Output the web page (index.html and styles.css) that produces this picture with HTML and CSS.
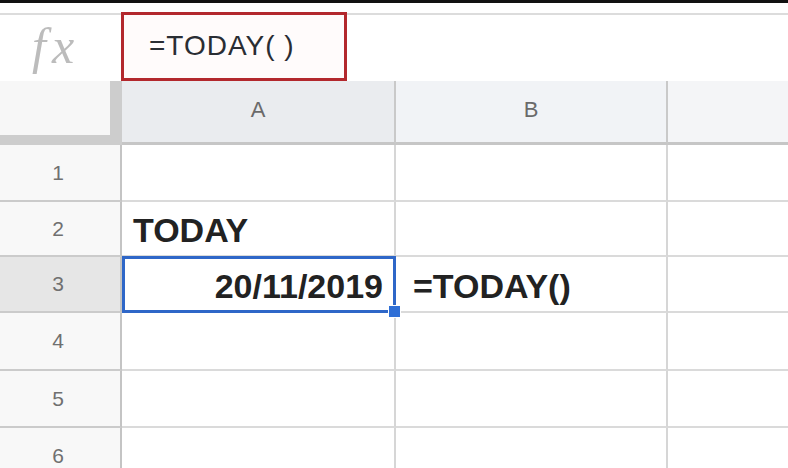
FILE: index.html
```html
<!DOCTYPE html>
<html>
<head>
<meta charset="utf-8">
<link rel="stylesheet" href="styles.css">
</head>
<body>
<div class="page">
  <div class="topbar"></div>
  <div class="formula-row">
    <div class="fx-cell"><span class="fx">fx</span></div>
    <div class="formula-box"><span class="formula-text">=TODAY(&nbsp;)</span></div>
    <div class="formula-rest"></div>
  </div>
  <div class="sheet">
    <div class="corner"></div>
    <div class="colhead colhead-a">A</div>
    <div class="colhead colhead-b">B</div>
    <div class="colhead colhead-c"></div>

    <div class="rowhead">1</div>
    <div class="cell"></div>
    <div class="cell"></div>
    <div class="cell last"></div>

    <div class="rowhead">2</div>
    <div class="cell"><span class="val">TODAY</span></div>
    <div class="cell"></div>
    <div class="cell last"></div>

    <div class="rowhead rowhead-sel">3</div>
    <div class="cell cell-sel right"><span class="val">20/11/2019</span></div>
    <div class="cell cell-b3"><span class="val">=TODAY()</span></div>
    <div class="cell last"></div>

    <div class="rowhead">4</div>
    <div class="cell"></div>
    <div class="cell"></div>
    <div class="cell last"></div>

    <div class="rowhead">5</div>
    <div class="cell"></div>
    <div class="cell"></div>
    <div class="cell last"></div>

    <div class="rowhead">6</div>
    <div class="cell"></div>
    <div class="cell"></div>
    <div class="cell last"></div>
  </div>
</div>
</body>
</html>
```
FILE: styles.css
```css
html, body {
  margin: 0;
  padding: 0;
  background: #ffffff;
}
.page {
  width: 788px;
  height: 468px;
  overflow: hidden;
  font-family: "Liberation Sans", Arial, sans-serif;
}
.topbar {
  height: 3px;
  background: #111111;
  margin-bottom: 9px;
}
.formula-row {
  display: flex;
  height: 69px;
}
.fx-cell {
  width: 121px;
  box-sizing: border-box;
  border-top: 2px solid #dcdcdc;
  margin-top: 1px;
  display: flex;
  align-items: center;
  padding-left: 32px;
}
.fx {
  font-family: "Liberation Serif", "Times New Roman", serif;
  font-style: italic;
  font-size: 50px;
  letter-spacing: 6px;
  color: #bcbcbc;
  line-height: 1;
  margin-top: -4px;
}
.formula-box {
  width: 226px;
  box-sizing: border-box;
  border: 3px solid #b3282d;
  background: #fffbfb;
  display: flex;
  align-items: center;
  padding-left: 25px;
}
.formula-text {
  font-size: 28px;
  letter-spacing: 1px;
  color: #2a2d33;
  margin-top: -2px;
}
.formula-rest {
  flex: 1;
  box-sizing: border-box;
  border-top: 2px solid #dcdcdc;
  margin-top: 1px;
}
.sheet {
  display: grid;
  grid-template-columns: 122px 274px 272px 1fr;
  grid-template-rows: 64px 57px 55px 56px 58px 57px 57px;
}
.corner {
  background: #f7f7f7;
  box-sizing: border-box;
  border-right: 12px solid #cdcdcd;
  border-bottom: 10px solid #cdcdcd;
}
.colhead {
  box-sizing: border-box;
  border-right: 2px solid #c9c9c9;
  border-bottom: 3px solid #c6c6c6;
  display: flex;
  align-items: center;
  justify-content: center;
  font-size: 22px;
  color: #6a6a6a;
  padding-bottom: 4px;
}
.colhead-a { background: #eaecef; }
.colhead-b { background: #f1f3f6; }
.colhead-c { background: #f4f5f7; border-right: none; }
.rowhead {
  background: #f8f8f8;
  box-sizing: border-box;
  border-right: 2px solid #c4c4c4;
  border-bottom: 2px solid #cbcbcb;
  display: flex;
  align-items: center;
  justify-content: center;
  font-size: 21px;
  color: #707070;
  padding-right: 4px;
}
.rowhead-sel { background: #e6e6e6; }
.cell {
  background: #ffffff;
  box-sizing: border-box;
  border-right: 2px solid #d6d6d6;
  border-bottom: 2px solid #dadada;
  display: flex;
  align-items: flex-end;
  padding: 0 10px 8px 11px;
  position: relative;
}
.cell.last { border-right: none; }
.cell.right { justify-content: flex-end; padding-right: 11px; }
.val {
  font-size: 34px;
  font-weight: bold;
  line-height: 34px;
  color: #222222;
  white-space: nowrap;
}
.cell-b3 { padding-left: 17px; }
.cell-sel::after {
  content: "";
  position: absolute;
  left: 0;
  top: -1px;
  right: -2px;
  bottom: -2px;
  border: 3px solid #2f67c8;
  pointer-events: none;
}
.cell-sel::before {
  content: "";
  position: absolute;
  right: -7px;
  bottom: -7px;
  width: 11px;
  height: 11px;
  background: #2f6fd6;
  border: 1px solid #ffffff;
  z-index: 2;
}
```
